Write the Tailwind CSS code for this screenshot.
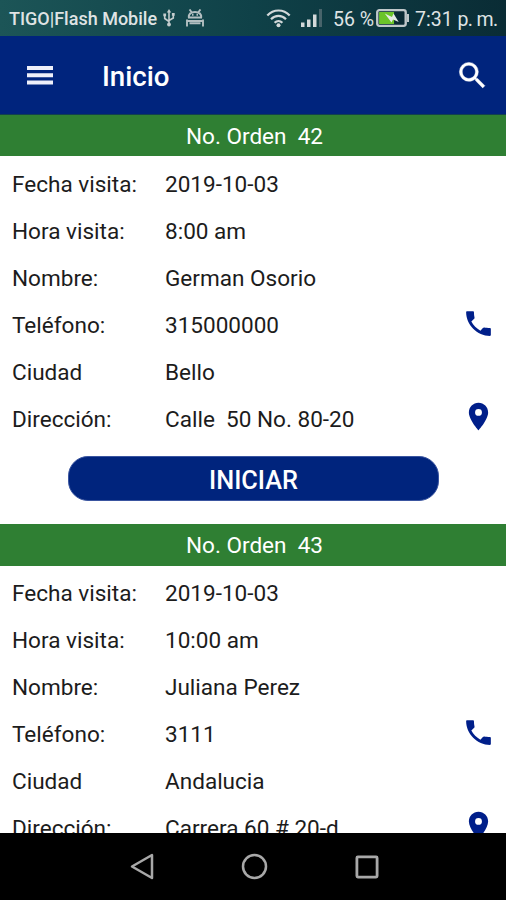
<!DOCTYPE html>
<html lang="es">
<head>
<meta charset="utf-8">
<title>Inicio</title>
<script src="https://cdn.jsdelivr.net/npm/@tailwindcss/browser@4"></script>
</head>
<body class="w-[506px] h-[900px] overflow-hidden bg-white flex flex-col font-['Roboto',sans-serif]">
<svg class="hidden">
  <symbol id="phone" viewBox="0 0 24 24"><path d="M6.800 10.600c1.440 2.830 3.760 5.140 6.590 6.590l1.800-1.900c.27-.27.67-.5 1.020-.4 1.220.3 2.430.32 3.970.32.55 0 .8.35.8.8V20.400c0 .4-.25.6-.6.6C11 21 3 13 3 3.600c0-.35.2-.6.6-.6h4.400c.4 0 .7.300.7.8 0 1.450.1 2.650.4 3.770.11.35.03.74-.25 1.020z"/></symbol>
  <symbol id="pin" viewBox="0 0 24 24"><path d="M12 2C8.13 2 5 5.13 5 9c0 5.25 7 13 7 13s7-7.75 7-13c0-3.87-3.13-7-7-7zm0 9.5a2.5 2.5 0 0 1 0-5 2.5 2.5 0 0 1 0 5z"/></symbol>
</svg>
<header class="shrink-0">
  <div class="h-[36px] flex items-center pl-[9px] bg-linear-to-r from-[#1c5557] via-[#0f4148] to-[#0a2c35] text-[#dfe3e4] whitespace-pre">
    <span class="w-[149px] text-[18px] font-medium">TIGO|Flash Mobile</span>
    <svg class="ml-[5px] w-[12px] h-[18px]" viewBox="0 0 12 18" fill="none" stroke="#c3cccd" stroke-width="1.6"><path d="M6 2v13M1.7 7v2.5L6 12.5M10.3 6v3L6 11.500"/><path d="M6 0L3.8 3.6h4.400z" fill="#c3cccd" stroke="none"/><circle cx="6" cy="15.500" r="1.900" fill="#c3cccd" stroke="none"/><path d="M.3 4.500h2.800v2.800H.3zM8.900 4h2.800v2.800H8.900z" fill="#c3cccd" stroke="none"/></svg>
    <svg class="ml-[11px] w-[18px] h-[18px]" viewBox="0 0 18 18" fill="none" stroke="#b3bfc1" stroke-width="1.900"><path d="M3.500 .5l2 2.500M14.500 .5l-2 2.500M2.700 8.500C2.700 4.500 5.500 3 9 3s6.300 1.500 6.300 5.500M2 8.500h14"/><path d="M1 10.500v7M17 10.500v7M1 12h16M3.500 14.200h11"/><path d="M6 5.800h1.500M10.500 5.800H12"/></svg>
    <svg class="ml-[62px] w-[25px] h-[19px]" viewBox="0 0 25 19" fill="none" stroke="#d3d9da" stroke-width="2.200"><path d="M1.300 6.500C7.500-.2 17.500-.2 23.700 6.500M5 10.300c4.300-4.500 10.700-4.500 15 0M8.600 13.700c2.300-2.300 5.500-2.300 7.800 0"/><circle cx="12.500" cy="16.300" r="2" fill="#d3d9da" stroke="none"/></svg>
    <svg class="ml-[10px] w-[22px] h-[18px]" viewBox="0 0 22 18" fill="#d3d9da"><path d="M0 13.500h3.500V18H0zM6 10.500h3.500V18H6zM12 5.500h3.500V18H12z"/><path d="M18 0h3v18h-3z" fill="#48646b"/></svg>
    <span class="ml-[10px] w-[43px] text-[19.500px] pt-[3px]">56 %</span>
    <svg class="w-[33px] h-[18px]" viewBox="0 0 32 18" preserveAspectRatio="none"><rect x="1.200" y="1.200" width="27.600" height="15.600" rx="2" fill="#0b2b34" stroke="#c0c8ca" stroke-width="2.300"/><path d="M30 5h2v8h-2z" fill="#c0c8ca"/><path d="M3 3h14.500v12H3z" fill="#6bc429"/><path d="M8.500 4.500l7 3.500 1.500-3.500L22 13l-5.500-2.500-1.500 3z" fill="#e4ebe4"/></svg>
    <span class="ml-[6px] text-[19.500px] pt-[3px] whitespace-pre">7:31 <span class="tracking-[-0.600px]">p. m.</span></span>
  </div>
  <div class="h-[79px] bg-[#00247d] flex items-center text-white border-b border-[#12414f]">
    <svg class="ml-[27px] w-[26px] h-[19px]" viewBox="0 0 26 19" fill="#eef0fa"><path d="M0 0h26v4H0zM0 7.200h26v4H0zM0 14.400h26v4H0z"/></svg>
    <h1 class="ml-[49px] text-[27.700px] font-medium flex-1 pt-[4px]">Inicio</h1>
    <svg class="w-[35px] h-[35px] mr-[16px]" viewBox="0 0 24 24" fill="#fff" stroke="#fff" stroke-width=".3"><path d="M15.500 14h-.79l-.28-.27A6.471 6.471 0 0 0 16 9.500 6.500 6.500 0 1 0 9.500 16c1.610 0 3.090-.59 4.230-1.570l.27.28v.79l5 4.990L20.490 19l-4.990-5zm-6 0C7.010 14 5 11.990 5 9.500S7.010 5 9.500 5 14 7.010 14 9.500 11.990 14 9.500 14z"/></svg>
  </div>
</header>
<main class="flex-1 min-h-0 overflow-hidden text-[22.550px] text-[#1c1c1c]">
  <section class="h-[409px]">
    <h2 class="h-[41px] bg-[#2f7f33] text-white flex items-center justify-center pl-[3px] pt-[2px] whitespace-pre">No. Orden  42</h2>
    <dl class="pt-[5px] *:h-[47px] *:flex *:items-center *:pl-[12px] *:pr-[11px] *:pt-[1px]">
      <div><dt class="w-[153px]">Fecha visita:</dt><dd>2019-10-03</dd></div>
      <div><dt class="w-[153px]">Hora visita:</dt><dd>8:00 am</dd></div>
      <div><dt class="w-[153px]">Nombre:</dt><dd>German Osorio</dd></div>
      <div><dt class="w-[153px]">Teléfono:</dt><dd class="flex-1">315000000</dd><svg class="w-[33px] h-[33px] mb-[6px]" fill="#001f8a"><use href="#phone"/></svg></div>
      <div><dt class="w-[153px]">Ciudad</dt><dd>Bello</dd></div>
      <div><dt class="w-[153px]">Dirección:</dt><dd class="flex-1 whitespace-pre">Calle  50 No. 80-20</dd><svg class="w-[33px] h-[33px] mb-[7px]" fill="#001f8a"><use href="#pin"/></svg></div>
    </dl>
    <button class="block mt-[13px] ml-[68px] w-[371px] h-[45px] pt-[4px] rounded-[20px] bg-[#00247d] border border-[#3a55a0] text-white text-[25.300px] font-medium">INICIAR</button>
  </section>
  <section class="h-[409px]">
    <h2 class="h-[42px] bg-[#2f7f33] text-white flex items-center justify-center pl-[3px] pt-[2px] whitespace-pre">No. Orden  43</h2>
    <dl class="pt-[4px] *:h-[47px] *:flex *:items-center *:pl-[12px] *:pr-[11px] *:pt-[1px]">
      <div><dt class="w-[153px]">Fecha visita:</dt><dd>2019-10-03</dd></div>
      <div><dt class="w-[153px]">Hora visita:</dt><dd>10:00 am</dd></div>
      <div><dt class="w-[153px]">Nombre:</dt><dd>Juliana Perez</dd></div>
      <div><dt class="w-[153px]">Teléfono:</dt><dd class="flex-1">3111</dd><svg class="w-[33px] h-[33px] mb-[6px]" fill="#001f8a"><use href="#phone"/></svg></div>
      <div><dt class="w-[153px]">Ciudad</dt><dd>Andalucia</dd></div>
      <div><dt class="w-[153px]">Dirección:</dt><dd class="flex-1">Carrera 60 # 20-d</dd><svg class="w-[33px] h-[33px] mb-[7px]" fill="#001f8a"><use href="#pin"/></svg></div>
    </dl>
  </section>
</main>
<nav class="shrink-0 h-[67px] bg-black flex items-center pl-[130px]">
  <svg class="w-[24px] h-[27px]" viewBox="0 0 24 27" fill="none" stroke="#a8a8a8" stroke-width="2.500" stroke-linejoin="round"><path d="M22 2v23L2 13.500z"/></svg>
  <svg class="ml-[87px] w-[27px] h-[27px]" viewBox="0 0 27 27" fill="none" stroke="#a8a8a8" stroke-width="2.500"><circle cx="13.500" cy="13.500" r="11.500"/></svg>
  <svg class="ml-[87px] w-[24px] h-[24px]" viewBox="0 0 24 24" fill="none" stroke="#a8a8a8" stroke-width="2.800"><rect x="1.900" y="1.900" width="20.200" height="20.200" rx="1"/></svg>
</nav>
</body>
</html>
